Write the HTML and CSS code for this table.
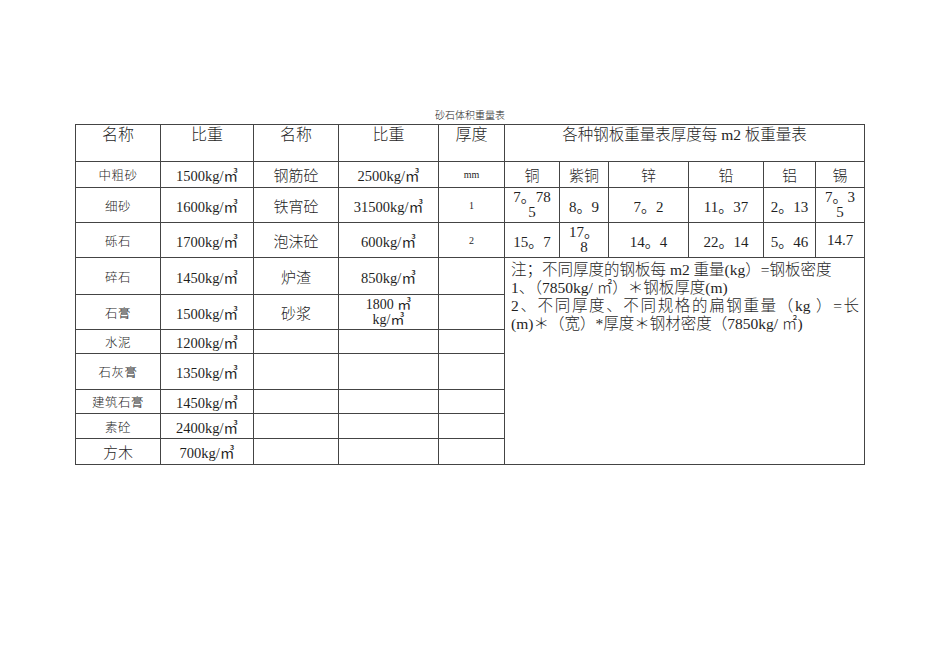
FILE: index.html
```html
<!DOCTYPE html>
<html lang="zh-CN">
<head>
<meta charset="utf-8">
<title>砂石体积重量表</title>
<link rel="stylesheet" href="styles.css">
</head>
<body>
<div class="page">
  <div class="title">砂石体积重量表</div>
  <table class="sheet">
    <colgroup>
      <col class="w85"><col class="w93"><col class="w85"><col class="w100"><col class="w66">
      <col class="w55"><col class="w49"><col class="w80"><col class="w75"><col class="w52"><col class="w49">
    </colgroup>
    <tr class="h37">
      <td class="hd">名称</td>
      <td class="hd">比重</td>
      <td class="hd">名称</td>
      <td class="hd">比重</td>
      <td class="hd">厚度</td>
      <td class="hd big" colspan="6">各种钢板重量表厚度每<span class="lat"> m2 </span>板重量表</td>
    </tr>
    <tr class="h26">
      <td class="name">中粗砂</td>
      <td class="val">1500kg/㎥</td>
      <td class="name-lg">钢筋砼</td>
      <td class="val">2500kg/㎥</td>
      <td class="tiny">mm</td>
      <td class="metal">铜</td>
      <td class="metal">紫铜</td>
      <td class="metal">锌</td>
      <td class="metal">铅</td>
      <td class="metal">铝</td>
      <td class="metal">锡</td>
    </tr>
    <tr class="h35">
      <td class="name">细砂</td>
      <td class="val">1600kg/㎥</td>
      <td class="name-lg">铁宵砼</td>
      <td class="val">31500kg/㎥</td>
      <td class="tiny">1</td>
      <td class="num wrap">7。78<br>5</td>
      <td class="num">8。9</td>
      <td class="num">7。2</td>
      <td class="num">11。37</td>
      <td class="num">2。13</td>
      <td class="num wrap">7。3<br>5</td>
    </tr>
    <tr class="h35">
      <td class="name">砾石</td>
      <td class="val">1700kg/㎥</td>
      <td class="name-lg">泡沫砼</td>
      <td class="val">600kg/㎥</td>
      <td class="tiny">2</td>
      <td class="num">15。7</td>
      <td class="num wrap">17。<br>8</td>
      <td class="num">14。4</td>
      <td class="num">22。14</td>
      <td class="num">5。46</td>
      <td class="num">14.7</td>
    </tr>
    <tr class="h37">
      <td class="name">碎石</td>
      <td class="val">1450kg/㎥</td>
      <td class="name-lg">炉渣</td>
      <td class="val">850kg/㎥</td>
      <td></td>
      <td class="note" colspan="6" rowspan="7">
        <div class="line">注；不同厚度的钢板每<span class="lat"> m2 </span>重量<span class="lat">(kg</span>）<span class="lat">=</span>钢板密度</div>
        <div class="line">1、（<span class="lat">7850kg/ </span>㎡）＊钢板厚度<span class="lat">(m)</span></div>
        <div class="line just">2、不同厚度、不同规格的扁钢重量（<span class="lat">kg </span>）<span class="lat">=</span>长</div>
        <div class="line"><span class="lat">(m)</span>＊（宽）<span class="lat">*</span>厚度＊钢材密度（<span class="lat">7850kg/ </span>㎡<span class="lat">)</span></div>
      </td>
    </tr>
    <tr class="h35">
      <td class="name">石膏</td>
      <td class="val">1500kg/㎥</td>
      <td class="name-lg">砂浆</td>
      <td class="val two">1800 ㎥<br>kg/㎥</td>
      <td></td>
    </tr>
    <tr class="h24">
      <td class="name">水泥</td>
      <td class="val">1200kg/㎥</td>
      <td></td><td></td><td></td>
    </tr>
    <tr class="h36">
      <td class="name">石灰膏</td>
      <td class="val">1350kg/㎥</td>
      <td></td><td></td><td></td>
    </tr>
    <tr class="h24">
      <td class="name">建筑石膏</td>
      <td class="val">1450kg/㎥</td>
      <td></td><td></td><td></td>
    </tr>
    <tr class="h25">
      <td class="name">素砼</td>
      <td class="val">2400kg/㎥</td>
      <td></td><td></td><td></td>
    </tr>
    <tr class="h26">
      <td class="name-lg">方木</td>
      <td class="val">700kg/㎥</td>
      <td></td><td></td><td></td>
    </tr>
  </table>
</div>
</body>
</html>
```

FILE: styles.css
```css
html, body {
  margin: 0;
  padding: 0;
  background: #ffffff;
}

body {
  font-family: "Liberation Serif", "Noto Sans CJK SC", serif;
  font-weight: 300;
  color: #1f1f1f;
}

.page {
  width: 790px;
  padding: 109px 0 0 75px;
}

.title {
  text-align: center;
  font-size: 10px;
  line-height: 14px;
  height: 15px;
  color: #222;
}

.sheet {
  border-collapse: collapse;
  table-layout: fixed;
  width: 790px;
}

.sheet td {
  border: 1px solid #444;
  padding: 0 3px;
  text-align: center;
  vertical-align: middle;
  overflow: hidden;
}

.w85 { width: 85px; }
.w93 { width: 93px; }
.w100 { width: 100px; }
.w66 { width: 66px; }
.w55 { width: 55px; }
.w49 { width: 49px; }
.w80 { width: 80px; }
.w75 { width: 75px; }
.w52 { width: 52px; }

.h37 { height: 37px; }
.h36 { height: 36px; }
.h35 { height: 35px; }
.h26 { height: 26px; }
.h25 { height: 25px; }
.h24 { height: 24px; }

.lat {
  font-weight: 400;
}

.sheet td.hd {
  vertical-align: top;
  font-size: 16px;
  line-height: 20px;
  padding-top: 0;
}

.sheet td.big {
  font-size: 15.5px;
}

.name {
  font-size: 12.5px;
  letter-spacing: 0.5px;
}

.name-lg {
  font-size: 15px;
}

.val {
  font-size: 14.5px;
  font-weight: 400;
  white-space: nowrap;
}

.val.two {
  font-size: 14px;
  line-height: 15px;
}

.tiny {
  font-size: 10px;
  font-weight: 400;
}

.metal {
  font-size: 15px;
}

.num {
  font-size: 15px;
  font-weight: 400;
  white-space: nowrap;
}

.num.wrap {
  line-height: 15px;
}

.sheet td.note {
  vertical-align: top;
  text-align: left;
  padding: 3px 5px 0 6px;
  font-size: 15.5px;
  line-height: 18px;
}

.line {
  white-space: nowrap;
}

.line.just {
  white-space: normal;
  text-align: justify;
  text-align-last: justify;
}
```
